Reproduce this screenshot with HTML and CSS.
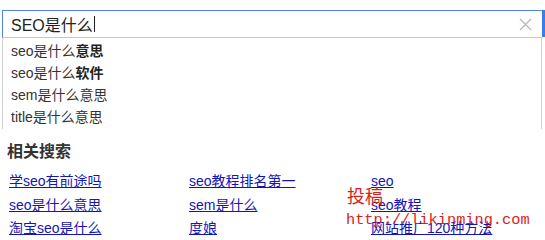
FILE: index.html
```html
<!DOCTYPE html>
<html lang="zh-CN">
<head>
    <meta charset="UTF-8">
    <title>SEO是什么</title>
    <link rel="stylesheet" href="styles.css">
</head>
<body>

    <div class="search">
        <div class="search-box">
            <span class="query">SEO是什么</span><span class="caret"></span>
            <svg class="clear" width="13" height="13" viewBox="0 0 13 13">
                <path d="M1 1 L12 12 M12 1 L1 12" stroke="#b4b4b4" stroke-width="1.2" fill="none"/>
            </svg>
        </div>
        <div class="search-btn"></div>
    </div>

    <ul class="suggest">
        <li>seo是什么<b>意思</b></li>
        <li>seo是什么<b>软件</b></li>
        <li>sem是什么意思</li>
        <li>title是什么意思</li>
    </ul>

    <div class="related">
        <h3>相关搜索</h3>
        <div class="related-grid">
            <a href="#">学seo有前途吗</a>
            <a href="#">seo教程排名第一</a>
            <a href="#">seo</a>
            <a href="#">seo是什么意思</a>
            <a href="#">sem是什么</a>
            <a href="#">seo教程</a>
            <a href="#">淘宝seo是什么</a>
            <a href="#">度娘</a>
            <a href="#">网站推广120种方法</a>
        </div>
    </div>

    <!-- watermark -->
    <div class="stamp">
        <span class="stamp-title">投稿</span>
        <span class="stamp-url">http://likinming.com</span>
    </div>

</body>
</html>
```

FILE: styles.css
```css
body {
    margin: 0;
    font-family: "Liberation Sans", Arial, "Noto Sans CJK SC", sans-serif;
    background: #fff;
    position: relative;
    width: 545px;
    height: 240px;
    overflow: hidden;
}
.search {
    display: flex;
    margin: 10px 0 0 2px;
    width: 560px;
}
.search-box {
    box-sizing: border-box;
    width: 540px;
    height: 28px;
    border: 1px solid #4f86e6;
    border-bottom: 1px solid #c4c7ce;
    border-right: none;
    display: flex;
    align-items: center;
    padding-left: 8px;
    position: relative;
}
.query {
    font-size: 16px;
    color: #222;
}
.caret {
    display: inline-block;
    width: 1px;
    height: 16px;
    background: #222;
    margin-left: 1px;
}
.clear {
    position: absolute;
    right: 10px;
    top: 7px;
}
.search-btn {
    width: 20px;
    height: 27px;
    background: #3b7ce6;
}
.suggest {
    list-style: none;
    margin: 0 0 0 2px;
    padding: 2px 0 1px;
    width: 540px;
    box-sizing: border-box;
    border: 1px solid #d0d0d0;
    border-top: none;
    border-bottom: none;
}
.suggest li {
    height: 22px;
    line-height: 22px;
    padding-left: 8px;
    font-size: 14px;
    color: #333;
}
.suggest b {
    color: #222;
}
.related {
    padding: 14px 0 0 7px;
}
.related h3 {
    margin: 0 0 11px;
    font-size: 16px;
    font-weight: bold;
    color: #333;
    line-height: 18px;
}
.related-grid {
    display: grid;
    grid-template-columns: 180px 182px 160px;
    row-gap: 5.5px;
    padding-left: 2px;
}
.related-grid a {
    font-size: 14px;
    line-height: 18px;
    color: #1414b8;
    text-decoration: underline;
}
.stamp {
    position: absolute;
    left: 346px;
    top: 186px;
    color: #d81e1e;
    line-height: 1;
}
.stamp-title {
    display: block;
    font-size: 18px;
    font-family: "Noto Sans CJK SC", sans-serif;
    margin-left: 1px;
}
.stamp-url {
    display: block;
    margin-top: 9px;
    font-size: 15.3px;
    font-family: "Liberation Mono", "Courier New", monospace;
}
```
